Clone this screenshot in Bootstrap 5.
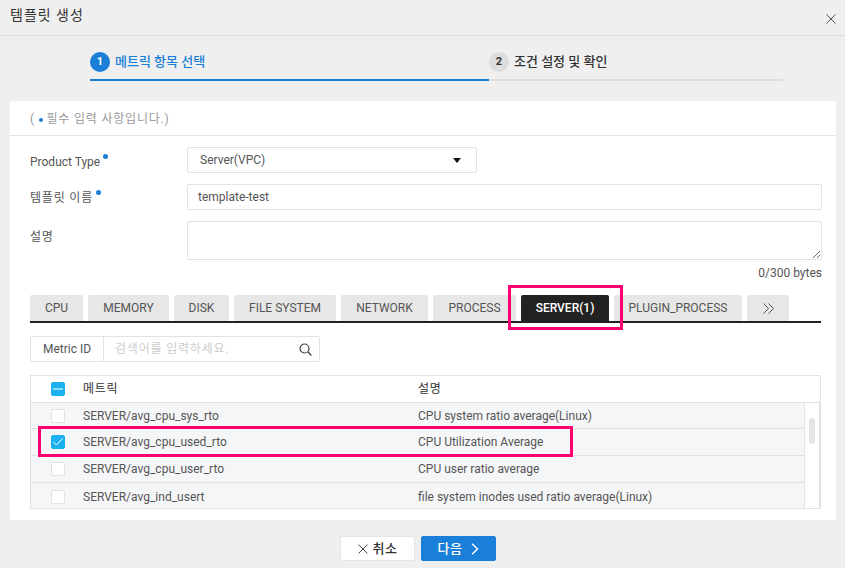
<!doctype html>
<html lang="ko">
<head>
<meta charset="utf-8">
<title>템플릿 생성</title>
<link rel="stylesheet" href="https://cdn.jsdelivr.net/npm/bootstrap@5.3.0/dist/css/bootstrap.min.css">
<style>
html,body{height:568px;overflow:hidden}
body{background:#efefef;font-family:Roboto,"Noto Sans CJK KR",sans-serif;font-size:12px;color:#555;position:relative}
.dlg-head{height:36px;padding:0 10px;border-bottom:1px solid #ddd}
.dlg-title{font-size:14px;letter-spacing:1px;color:#333;margin:0 0 5px;font-weight:400;line-height:30px}
.dlg-close{margin:3px -1px 0 0;background:none;border:0;padding:0;line-height:0}
.stepper{margin:0 62px 0 90px;height:45px;padding-top:16px}
.step-item{height:29px;border-bottom:2px solid #ddd;font-size:13px;font-weight:500;color:#333;gap:5px;padding-bottom:7px}
.step-a{width:399px;border-color:#1a7fd8;color:#1a7fd8}
.step-b{flex:1}
.step-num{width:20px;height:20px;border-radius:50%;font-size:11px;font-weight:700;background:#ddd;color:#333;flex:none}
.step-a .step-num{background:#1a7fd8;color:#fff}
.main-panel{margin:20px 9px 0 10px;height:419px;background:#fff;border-radius:3px;padding:0}
.req-note{height:35px;padding:0 20px;border-bottom:1px solid #e3e3e3;color:#999;line-height:36px;letter-spacing:.8px}
.blue-dot{display:inline-block;width:4px;height:4px;border-radius:50%;background:#1a7fd8;vertical-align:middle}
.form-body{padding:11px 14px 0 20px}
.field-row{margin-bottom:11px}
.field-label{width:157px;height:26px;flex:none;font-size:12px;color:#555;line-height:26px;position:relative}
.field-label .blue-dot{width:5px;height:5px;vertical-align:7px;margin-left:3px}
.lbl-a{line-height:30px}
.lbl-b{line-height:28px;letter-spacing:.8px}
.lbl-c{line-height:32px;letter-spacing:.8px}
.fld{height:26px;border:1px solid #e2e2e2;border-radius:2px;padding:0 10px;font-size:12px;color:#555;background:#fff;line-height:24px}
.fld-sel{width:290px;padding:0 12px}
.caret-ico{width:0;height:0;border-left:4px solid transparent;border-right:4px solid transparent;border-top:5px solid #111;margin-right:3px}
.fld-area{height:39px;resize:both;flex:1;display:block}
.byte-count{text-align:right;line-height:14px;margin-top:-5px;height:29px;font-size:12px}
.tab-strip{gap:5px;height:28px;border-bottom:2px solid #222;margin:0 1px 13px 0;padding:0;list-style:none}
.tab-cell{height:26px;background:#e7e7e7;border-radius:2px 2px 0 0;text-align:center;line-height:26px;color:#555;font-size:12px}
.tab-on{background:#222;color:#fff;font-weight:500}
.search-bar{width:290px;height:26px;border:1px solid #e2e2e2;border-radius:2px;margin-bottom:13px}
.search-key{width:73px;border-right:1px solid #e2e2e2;text-align:center;color:#555;line-height:24px;flex:none}
.search-ph{flex:1;padding-left:11px;color:#ccc;line-height:24px;letter-spacing:.8px}
.search-ico{margin-right:7px;line-height:0}
.metric-wrap{height:134px;margin-right:1px;border:1px solid #e2e2e2;overflow:hidden}
.metric-head{height:27px;border-bottom:1px solid #e2e2e2;color:#333;line-height:26px}
.ko-spaced{letter-spacing:.7px}
.metric-row{height:27px;line-height:26px;background:#f5f6f8;border-bottom:1px solid #e2e2e2;margin-right:15px;border-right:1px solid #e2e2e2}
.metric-row:first-child{height:26px}
.metric-row:nth-child(4){border-bottom:0}
.cell-chk{width:20px;margin-left:20px;flex:none;line-height:0}
.cell-name{width:335px;margin-left:12px;flex:none}
.chk-box{display:block;width:14px;height:14px;background:#fff;border:1px solid #e2e2e2;border-radius:2px}
.chk-on{background:#1bb1f0;border-color:#1bb1f0}
.metric-body{position:relative;height:105px}
.scroll-track{position:absolute;right:0;top:0;bottom:0;width:15px;background:#fff;border-right:1px solid #e2e2e2}
.scroll-thumb{position:absolute;left:4px;top:15px;width:6px;height:26px;border-radius:3px;background:#e4e4e4}
.dlg-foot{gap:6px;margin:16px 9px 0 0}
.foot-btn{width:75px;height:25px;border-radius:2px;font-size:13px;font-weight:500;gap:5px;padding:0;border:1px solid #e5e5e5;background:#fff;color:#333;letter-spacing:.5px}
.foot-primary{background:#1a7fd8;border-color:#1a7fd8;color:#fff;gap:9px}
.hl-box{position:absolute;border:3px solid #ff0070;pointer-events:none}
.hl-tab{left:508px;top:285px;width:115px;height:45px}
.hl-row{left:38px;top:426px;width:535px;height:31px}
</style>
</head>
<body>
<div class="dlg-head d-flex justify-content-between align-items-center">
  <h1 class="dlg-title">템플릿 생성</h1>
  <button class="dlg-close" aria-label="닫기"><svg width="10" height="10" viewBox="0 0 10 10"><path d="M.5.5l9 9M9.5.5l-9 9" stroke="#555" fill="none"/></svg></button>
</div>
<div class="stepper d-flex">
  <div class="step-item step-a d-flex align-items-center"><span class="step-num d-flex align-items-center justify-content-center">1</span>메트릭 항목 선택</div>
  <div class="step-item step-b d-flex align-items-center"><span class="step-num d-flex align-items-center justify-content-center">2</span>조건 설정 및 확인</div>
</div>
<div class="main-panel">
  <div class="req-note">( <span class="blue-dot"></span> 필수 입력 사항입니다.)</div>
  <div class="form-body">
    <div class="field-row d-flex">
      <div class="field-label lbl-a">Product Type<span class="blue-dot"></span></div>
      <div class="fld fld-sel d-flex justify-content-between align-items-center"><span>Server(VPC)</span><span class="caret-ico"></span></div>
    </div>
    <div class="field-row d-flex">
      <div class="field-label lbl-b">템플릿 이름<span class="blue-dot"></span></div>
      <input class="fld flex-grow-1" value="template-test" aria-label="템플릿 이름">
    </div>
    <div class="field-row d-flex">
      <div class="field-label lbl-c">설명</div>
      <textarea class="fld fld-area" aria-label="설명"></textarea>
    </div>
    <div class="byte-count">0/300 bytes</div>
    <div class="tab-strip d-flex">
      <div class="tab-cell" style="width:53px">CPU</div>
      <div class="tab-cell" style="width:81px">MEMORY</div>
      <div class="tab-cell" style="width:55px">DISK</div>
      <div class="tab-cell" style="width:102px">FILE SYSTEM</div>
      <div class="tab-cell" style="width:87px">NETWORK</div>
      <div class="tab-cell" style="width:83px">PROCESS</div>
      <div class="tab-cell tab-on" style="width:88px">SERVER(1)</div>
      <div class="tab-cell" style="width:128px">PLUGIN_PROCESS</div>
      <div class="tab-cell" style="width:42px"><svg width="13" height="11" viewBox="0 0 13 11"><path d="M1.5.5l5 5-5 5M6.5.5l5 5-5 5" stroke="#555" fill="none"/></svg></div>
    </div>
    <div class="search-bar d-flex align-items-center">
      <div class="search-key">Metric ID</div>
      <div class="search-ph">검색어를 입력하세요.</div>
      <span class="search-ico"><svg width="13" height="13" viewBox="0 0 13 13"><circle cx="5.5" cy="5.5" r="4.5" stroke="#444" fill="none" stroke-width="1.2"/><path d="M8.8 8.8l3.6 3.6" stroke="#444" stroke-width="1.4"/></svg></span>
    </div>
    <div class="metric-wrap">
      <div class="metric-head d-flex align-items-center">
        <div class="cell-chk"><span class="chk-box chk-on d-flex align-items-center justify-content-center"><svg width="10" height="2" viewBox="0 0 10 2"><path d="M0 1h10" stroke="#fff"/></svg></span></div>
        <div class="cell-name ko-spaced">메트릭</div><div class="ko-spaced">설명</div>
      </div>
      <div class="metric-body">
        <div class="metric-row d-flex align-items-center"><div class="cell-chk"><span class="chk-box"></span></div><div class="cell-name">SERVER/avg_cpu_sys_rto</div><div>CPU system ratio average(Linux)</div></div>
        <div class="metric-row d-flex align-items-center"><div class="cell-chk"><span class="chk-box chk-on d-flex align-items-center justify-content-center"><svg width="10" height="8" viewBox="0 0 10 8"><path d="M.5 4l3 3 6-6.5" stroke="#fff" fill="none"/></svg></span></div><div class="cell-name">SERVER/avg_cpu_used_rto</div><div>CPU Utilization Average</div></div>
        <div class="metric-row d-flex align-items-center"><div class="cell-chk"><span class="chk-box"></span></div><div class="cell-name">SERVER/avg_cpu_user_rto</div><div>CPU user ratio average</div></div>
        <div class="metric-row d-flex align-items-center"><div class="cell-chk"><span class="chk-box"></span></div><div class="cell-name">SERVER/avg_ind_usert</div><div>file system inodes used ratio average(Linux)</div></div>
        <div class="scroll-track"><div class="scroll-thumb"></div></div>
      </div>
    </div>
  </div>
</div>
<div class="dlg-foot d-flex justify-content-center">
  <button class="foot-btn d-flex align-items-center justify-content-center"><svg width="10" height="10" viewBox="0 0 10 10"><path d="M.5.5l9 9M9.5.5l-9 9" stroke="#444" fill="none"/></svg>취소</button>
  <button class="foot-btn foot-primary d-flex align-items-center justify-content-center">다음<svg width="8" height="12" viewBox="0 0 8 12"><path d="M1 .8l5.5 5.2L1 11.2" stroke="#fff" fill="none" stroke-width="1.4"/></svg></button>
</div>
<div class="hl-box hl-tab"></div>
<div class="hl-box hl-row"></div>
<script src="https://cdn.jsdelivr.net/npm/bootstrap@5.3.0/dist/js/bootstrap.bundle.min.js"></script>
</body>
</html>
